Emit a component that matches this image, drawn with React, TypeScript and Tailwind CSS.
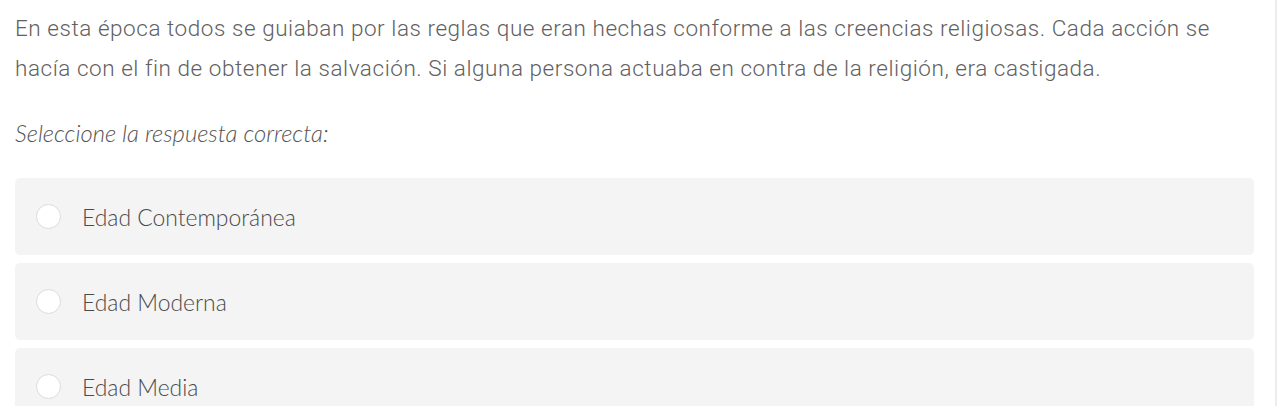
import React from "react";

const options = ["Edad Contemporánea", "Edad Moderna", "Edad Media"];

export default function App() {
  return (
    <div className="flex w-[1284px] h-[406px] overflow-hidden bg-white">
      <div className="flex-1 pl-[15px] pr-[21px] pt-[8px]">
        <p
          className="text-[22.5px] leading-[40px] tracking-[0.55px] font-light text-[#616161]"
          style={{ fontFamily: "Roboto, 'Liberation Sans', sans-serif" }}
        >
          En esta época todos se guiaban por las reglas que eran hechas conforme a las creencias religiosas. Cada acción se hacía con el fin de obtener la salvación. Si alguna persona actuaba en contra de la religión, era castigada.
        </p>
        <p
          className="mt-[33px] text-[23.8px] leading-[24px] italic font-light text-[#555555]"
          style={{ fontFamily: "Lato, 'Liberation Sans', sans-serif" }}
        >
          Seleccione la respuesta correcta:
        </p>
        <div className="mt-[33px] flex flex-col gap-[8px]">
          {options.map((o) => (
            <div
              key={o}
              className="flex items-center h-[77px] rounded-[5px] bg-[#f4f4f4] pl-[21px]"
            >
              <span className="w-[25px] h-[25px] rounded-full bg-white border border-[#dcdcdc] shrink-0" />
              <span
                className="ml-[21px] text-[22.9px] leading-[28px] font-light text-[#4a4a4a]"
                style={{ fontFamily: "Lato, 'Liberation Sans', sans-serif" }}
              >
                {o}
              </span>
            </div>
          ))}
        </div>
      </div>
      <div className="w-[2px] h-full bg-[#ececec] mr-[7px]" />
    </div>
  );
}
